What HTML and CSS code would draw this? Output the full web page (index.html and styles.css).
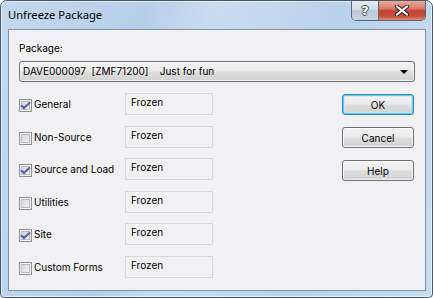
FILE: index.html
```html
<!DOCTYPE html>
<html lang="en">
<head>
    <meta charset="UTF-8">
    <title>Unfreeze Package</title>
    <link rel="stylesheet" href="styles.css">
</head>
<body>
    <div class="window">
        <!-- title bar -->
        <div class="title">Unfreeze Package</div>
        <div class="capbtns">
            <div class="capbtn help"><span>?</span></div>
            <div class="capbtn close">
                <svg width="16" height="11" viewBox="0 0 16 11">
                    <path d="M3 1.5 L13 9.5 M13 1.5 L3 9.5" stroke="#3a2a2a" stroke-width="4.2" stroke-linecap="round"/>
                    <path d="M3 1.5 L13 9.5 M13 1.5 L3 9.5" stroke="#fff" stroke-width="2.2" stroke-linecap="round"/>
                </svg>
            </div>
        </div>

        <!-- client area -->
        <div class="client">
            <div class="pkglabel">Package:</div>
            <div class="combo">
                <span class="combotext">DAVE000097  [ZMF71200]    Just for fun</span>
                <span class="arrow"></span>
            </div>

            <div class="main">
                <div class="rows">
                    <div class="row">
                        <label class="chk"><span class="box on"></span>General</label>
                        <div class="state">Frozen</div>
                    </div>
                    <div class="row">
                        <label class="chk"><span class="box"></span>Non-Source</label>
                        <div class="state">Frozen</div>
                    </div>
                    <div class="row">
                        <label class="chk"><span class="box on"></span>Source and Load</label>
                        <div class="state">Frozen</div>
                    </div>
                    <div class="row">
                        <label class="chk"><span class="box"></span>Utilities</label>
                        <div class="state">Frozen</div>
                    </div>
                    <div class="row">
                        <label class="chk"><span class="box on"></span>Site</label>
                        <div class="state">Frozen</div>
                    </div>
                    <div class="row">
                        <label class="chk"><span class="box"></span>Custom Forms</label>
                        <div class="state">Frozen</div>
                    </div>
                </div>

                <div class="btns">
                    <button class="btn dflt">OK</button>
                    <button class="btn">Cancel</button>
                    <button class="btn">Help</button>
                </div>
            </div>
        </div>
    </div>
</body>
</html>
```

FILE: styles.css
```css
html, body{
    margin: 0;
    padding: 0;
    background: #ffffff;
}
body{
    font-family: Inter, "Liberation Sans", Arial, sans-serif;
    font-size: 10px;
    color: #000;
}

/* window frame */
.window{
    position: relative;
    width: 433px;
    height: 298px;
    box-sizing: border-box;
    border: 1px solid #4b5868;
    border-radius: 7px 7px 4px 4px;
    padding: 0 6px 6px 7px;
    background: linear-gradient(100deg, #c3d9ef 0%, #b6cfe9 30%, #c9ddf2 45%, #b9d2eb 70%, #c6dbf0 100%);
    box-shadow: inset 0 0 0 1px rgba(255,255,255,.55);
}
.title{
    height: 28px;
    box-sizing: border-box;
    padding-top: 6px;
    line-height: 15px;
    font-family: "Noto Sans", "Liberation Sans", sans-serif;
    font-size: 11.2px;
    color: #000;
}

/* caption buttons (over the frame) */
.capbtns{
    position: absolute;
    top: 0;
    right: 6px;
    display: flex;
    height: 19px;
    border: 1px solid #5a6878;
    border-top: none;
    border-radius: 0 0 5px 5px;
    overflow: hidden;
}
.capbtn{
    height: 19px;
    display: flex;
    align-items: center;
    justify-content: center;
}
.help{
    width: 26px;
    border-right: 1px solid #5a6878;
    background: linear-gradient(#e4ebf3 0%, #d3dde8 45%, #b9c8d8 50%, #c9d6e4 100%);
}
.help span{
    font-family: "DejaVu Sans", sans-serif;
    font-weight: bold;
    font-size: 13px;
    color: #fff;
    text-shadow: 1px 0 #3d4a5a, -1px 0 #3d4a5a, 0 1px #3d4a5a, 0 -1px #3d4a5a;
}
.close{
    width: 46px;
    background: linear-gradient(#e7a99b 0%, #d77a68 40%, #c2402f 52%, #c9503c 80%, #e08c72 100%);
}

/* client area */
.client{
    height: 262px;
    box-sizing: border-box;
    border: 1px solid #8493a3;
    background: #f1f0f2;
    padding: 12px 10px 0 10px;
}
.pkglabel{
    height: 13px;
    line-height: 13px;
}
.combo{
    margin-top: 6px;
    height: 21px;
    box-sizing: border-box;
    border: 1px solid #707070;
    border-radius: 3px;
    background: linear-gradient(#f3f3f3 0%, #ebebeb 48%, #dddddd 52%, #d2d2d2 100%);
    box-shadow: inset 0 0 0 1px rgba(255,255,255,.7);
    display: flex;
    align-items: center;
    padding: 0 6px 0 3px;
}
.combotext{
    flex: 1;
    white-space: pre;
    line-height: 13px;
}
.arrow{
    width: 0;
    height: 0;
    border-left: 4px solid transparent;
    border-right: 4px solid transparent;
    border-top: 4px solid #000;
    margin-top: 1px;
}

/* rows + buttons */
.main{
    display: flex;
    justify-content: space-between;
    margin-top: 11px;
    padding-right: 1px;
}
.rows{
    display: flex;
    flex-direction: column;
    gap: 10.6px;
}
.row{
    display: flex;
    height: 22px;
}
/* checkbox + label */
.chk{
    width: 106px;
    box-sizing: border-box;
    display: flex;
    align-items: flex-start;
    padding-top: 5px;
    line-height: 13px;
}
.chk .box{
    flex: none;
    position: relative;
    width: 13px;
    height: 13px;
    margin: 1px 2px 0 0;
    box-sizing: border-box;
    border: 1px solid #8e8f8f;
    background: linear-gradient(135deg, #cdd0d5, #f7f7f7);
    box-shadow: inset 0 0 0 1px #f4f4f4, inset 0 0 0 2px #b9bcc1;
}
.chk .box.on::after{
    content: "";
    position: absolute;
    left: 3px;
    top: 0;
    width: 3px;
    height: 7px;
    border-right: 2px solid #4e62a6;
    border-bottom: 2px solid #4e62a6;
    transform: rotate(40deg) skewX(-8deg);
}
/* read-only state box */
.state{
    width: 88px;
    height: 22px;
    box-sizing: border-box;
    border: 1px solid #d8d8d8;
    padding: 2px 0 0 5px;
    line-height: 13px;
    background: #f1f0f2;
}

.btns{
    display: flex;
    flex-direction: column;
    gap: 12px;
    margin-top: 1px;
}
.btn{
    width: 72px;
    height: 21px;
    box-sizing: border-box;
    font-family: Inter, "Liberation Sans", Arial, sans-serif;
    font-size: 10px;
    line-height: 13px;
    color: #000;
    border: 1px solid #707070;
    border-radius: 3px;
    background: linear-gradient(#f3f3f3 0%, #ebebeb 48%, #dddddd 52%, #d2d2d2 100%);
    box-shadow: inset 0 0 0 1px rgba(255,255,255,.75);
    padding: 1px 0 0 0;
}
.btn.dflt{
    border-color: #3c7fb1;
    box-shadow: inset 0 0 0 1px #4fd3fa, inset 0 0 0 2px rgba(190,235,252,.6);
}
```
